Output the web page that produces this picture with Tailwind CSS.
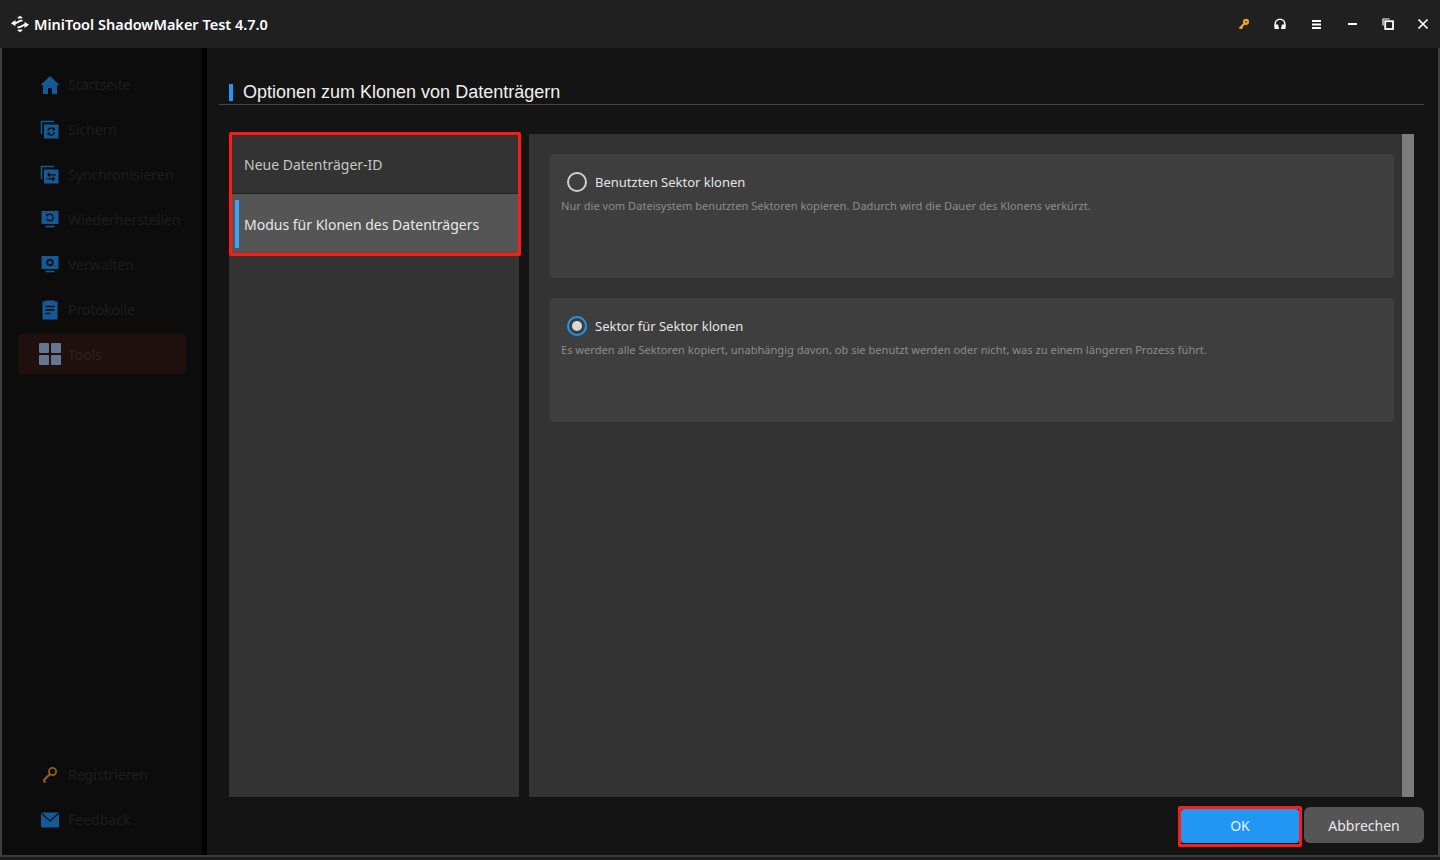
<!DOCTYPE html>
<html lang="de">
<head>
<meta charset="utf-8">
<script src="https://cdn.jsdelivr.net/npm/@tailwindcss/browser@4"></script>
</head>
<body class="m-0 h-[860px] w-[1440px] overflow-hidden bg-[#1a1a1a] font-['Noto_Sans','Open_Sans',sans-serif]">
<div class="flex h-[860px] w-[1440px] flex-col">
  <header class="flex h-12 shrink-0 items-center bg-[#202020] pl-[11px]">
    <svg class="h-[18px] w-[18px]" viewBox="0 0 18 18"><path d="M6.300 2.800 9 .8l2.700 2-1 .7H7.300zM6.300 15.200 9 17.200l2.700-2-1-.7H7.300z" fill="#fff"/><path d="M0 8.200 4.500 5v6.200zM18 9.800 13.500 13V6.800z" fill="#fff"/><path d="M4 8.200C7 8.200 7.500 5 11.500 5.800M14 9.800C11 9.800 10.500 13 6.500 12.200" fill="none" stroke="#fff" stroke-width="1.700"/></svg>
    <span class="ml-[5px] pt-[2px] text-[14.500px] font-semibold text-white">MiniTool ShadowMaker Test 4.7.0</span>
    <div class="ml-auto flex h-full items-center">
      <svg class="absolute left-[1238px] top-[18px] h-3 w-3" viewBox="0 0 12 12" fill="none" stroke="#f5a623"><circle cx="8" cy="3.800" r="2" stroke-width="2.200"/><path d="M6.500 5.500 1.500 10.500M3 9l1.500 1.500" stroke-width="2"/></svg>
      <svg class="absolute left-[1274px] top-[18px] h-3 w-3" viewBox="0 0 12 12" fill="none" stroke="#fff" stroke-width="1.500"><path d="M1.200 9V6a4.800 4.800 0 0 1 9.600 0v3"/><path d="M.5 6.500h3.500l1 4.500H.5zM11.500 6.500H8l-1 4.500h4.500z" fill="#fff" stroke="none"/></svg>
      <svg class="absolute left-[1311px] top-[19px] h-[11px] w-[11px]" viewBox="0 0 11 11" fill="#fff"><path d="M1 1h9v2H1zM1 4.500h9v2H1zM1 8h9v2H1z"/></svg>
      <div class="absolute left-[1348px] top-[23px] h-[2px] w-[9px] bg-white"></div>
      <svg class="absolute left-[1382px] top-[18px] h-3 w-3" viewBox="0 0 12 12" fill="none" stroke="#fff"><path d="M1 7.500V1h6.500" stroke-width="1.200"/><rect x="3.200" y="3.200" width="7.800" height="7.800" stroke-width="1.800"/></svg>
      <svg class="absolute left-[1417px] top-[18px] h-3 w-3" viewBox="0 0 12 12" fill="none" stroke="#fff" stroke-width="1.700"><path d="M1.500 1.500l9 9M10.500 1.500l-9 9"/></svg>
    </div>
  </header>
  <div class="mb-[3px] flex min-h-0 flex-1 border-b-2 border-b-[#3c3c3c] border-l-2 border-l-[#3f3f3f] border-r-2 border-r-[#3f3f3f]">
    <aside class="box-content flex w-[200px] shrink-0 flex-col justify-between border-r-[5px] border-r-black bg-[#0c0c0c]">
      <nav class="flex flex-col pt-[14px] text-[14px] text-[#1e1e1e]">
        <div class="flex h-[45px] items-center pl-[38px]">
          <svg class="h-5 w-5" viewBox="0 0 20 20" fill="#145a96"><path d="M10 1 0.500 10H3v9h5v-6h4v6h5v-9h2.500z"/></svg>
          <span class="ml-2">Startseite</span>
        </div>
        <div class="flex h-[45px] items-center pl-[38px]">
          <svg class="h-5 w-5" viewBox="0 0 20 20"><path d="M1.500 14V1.500H14" fill="none" stroke="#145a96" stroke-width="1.500"/><rect x="4" y="4.500" width="14.500" height="14" fill="#145a96"/><path d="M8 11a3.300 3.300 0 0 1 5.800-2M14.500 12a3.300 3.300 0 0 1-5.800 2" fill="none" stroke="#0c0c0c" stroke-width="1.300"/><path d="M15 7.500v3h-3zM7.500 15.500v-3h3z" fill="#0c0c0c"/></svg>
          <span class="ml-2">Sichern</span>
        </div>
        <div class="flex h-[45px] items-center pl-[38px]">
          <svg class="h-5 w-5" viewBox="0 0 20 20"><path d="M1.500 14V1.500H14" fill="none" stroke="#145a96" stroke-width="1.500"/><rect x="4" y="4.500" width="14.500" height="14" fill="#145a96"/><path d="M8 9.800h8M14 13.800H6.500" stroke="#0c0c0c" stroke-width="1.300"/><path d="M10 7v5.500L7 9.800zM12.500 11v5.500l3-2.700z" fill="#0c0c0c"/></svg>
          <span class="ml-2">Synchronisieren</span>
        </div>
        <div class="flex h-[45px] items-center pl-[38px]">
          <svg class="h-5 w-5" viewBox="0 0 20 20"><path d="M1.500 1h17v13h-17z" fill="#145a96"/><path d="M5.500 16.500h9" stroke="#145a96" stroke-width="1.600"/><path d="M7 5.800A3.300 3.300 0 1 1 6.800 8.500" fill="none" stroke="#0c0c0c" stroke-width="1.300"/><path d="M5.800 3.500 9 4.500 6.500 7z" fill="#0c0c0c"/></svg>
          <span class="ml-2">Wiederherstellen</span>
        </div>
        <div class="flex h-[45px] items-center pl-[38px]">
          <svg class="h-5 w-5" viewBox="0 0 20 20"><path d="M1.500 1h17v13h-17z" fill="#145a96"/><path d="M5.500 16.500h9" stroke="#145a96" stroke-width="1.600"/><circle cx="10" cy="7.500" r="2.800" fill="none" stroke="#0c0c0c" stroke-width="1.500"/><path d="M10 3.500v8M6 7.500h8M7.200 4.700l5.600 5.600M12.800 4.700l-5.600 5.600" stroke="#0c0c0c" stroke-width="1"/><circle cx="10" cy="7.500" r="1.800" fill="#145a96"/></svg>
          <span class="ml-2">Verwalten</span>
        </div>
        <div class="flex h-[45px] items-center pl-[38px]">
          <svg class="h-5 w-5" viewBox="0 0 20 20"><path d="M2.500 1.500h3V.5h9v1h3v18h-15z" fill="#145a96"/><path d="M5.500 6.500h9M5.500 10h9M5.500 13.500h5" stroke="#0c0c0c" stroke-width="1.300"/></svg>
          <span class="ml-2">Protokolle</span>
        </div>
        <div class="ml-4 mt-[2px] flex h-10 w-[168px] items-center rounded bg-[#200f0f] pl-[21px] text-[#2c2222]">
          <svg class="h-[22px] w-[22px] shrink-0" viewBox="0 0 22 22" fill="#66768f"><rect width="10" height="10" rx="1"/><rect x="12" width="10" height="10" rx="1"/><rect y="12" width="10" height="10" rx="1"/><rect x="12" y="12" width="10" height="10" rx="1"/></svg>
          <span class="ml-[7px]">Tools</span>
        </div>
      </nav>
      <div class="flex flex-col pb-[13px] text-[14px] text-[#1e1e1e]">
        <div class="flex h-[45px] items-center pl-[38px]">
          <svg class="h-5 w-5" viewBox="0 0 20 20" fill="none" stroke="#8a6116"><circle cx="12.500" cy="6.500" r="3.600" stroke-width="1.800"/><path d="M9.800 9.200 3.500 15.500M3.500 15.500l2 2" stroke-width="2.200"/></svg>
          <span class="ml-2">Registrieren</span>
        </div>
        <div class="flex h-[45px] items-center pl-[38px]">
          <svg class="h-5 w-5" viewBox="0 0 20 20"><rect x="1" y="2.500" width="18" height="15" rx="1" fill="#145a96"/><path d="M1.500 3.500 10 11l8.500-7.500" fill="none" stroke="#0c0c0c" stroke-width="1.200"/></svg>
          <span class="ml-2">Feedback</span>
        </div>
      </div>
    </aside>
    <main class="relative flex min-w-0 flex-1 flex-col bg-[#141414] pl-[12px] pr-[14px]">
      <div class="flex h-[57px] shrink-0 items-end border-b border-[#444] pl-[10px]">
        <span class="mb-[3px] h-[17px] w-1 bg-[#2196f3]"></span>
        <h1 class="ml-[10px] text-[18px] leading-[24px] text-[#f0f0f0] font-['Liberation_Sans',sans-serif]">Optionen zum Klonen von Datenträgern</h1>
      </div>
      <div class="mt-[29px] flex h-[663px] shrink-0 pl-[10px] pr-[10px]">
        <div class="w-[290px] shrink-0 bg-[#333]">
          <div class="flex h-[60px] items-center border-b border-[#222] pl-[15px] pt-[2px] text-[14px] text-[#c6c6c6]">Neue Datenträger-ID</div>
          <div class="flex h-[60px] items-center bg-[#555] pl-[6px] text-[14px] text-[#e8e8e8]">
            <span class="h-12 w-1 bg-[#3fa0f5]"></span>
            <span class="ml-[5px]">Modus für Klonen des Datenträgers</span>
          </div>
        </div>
        <div class="ml-[10px] flex flex-1 bg-[#333]">
          <div class="flex flex-1 flex-col gap-5 py-5 pl-5 pr-2">
            <section class="h-[124px] rounded bg-[#3e3e3e] pl-3 pt-[18px]">
              <label class="flex items-center pl-[6px] text-[13px] leading-5 text-[#e4e4e4]">
                <span class="h-5 w-5 rounded-full border-2 border-[#d0d0d0]"></span>
                <span class="ml-2">Benutzten Sektor klonen</span>
              </label>
              <p class="mt-[6px] text-[11.080px] leading-4 text-[#8c8c8c]">Nur die vom Dateisystem benutzten Sektoren kopieren. Dadurch wird die Dauer des Klonens verkürzt.</p>
            </section>
            <section class="h-[124px] rounded bg-[#3e3e3e] pl-3 pt-[18px]">
              <label class="flex items-center pl-[6px] text-[13px] leading-5 text-[#e4e4e4]">
                <span class="flex h-5 w-5 items-center justify-center rounded-full border-2 border-[#2196f3]"><span class="h-[10px] w-[10px] rounded-full bg-[#d8d8d8]"></span></span>
                <span class="ml-2">Sektor für Sektor klonen</span>
              </label>
              <p class="mt-[6px] text-[11.080px] leading-4 text-[#8c8c8c]">Es werden alle Sektoren kopiert, unabhängig davon, ob sie benutzt werden oder nicht, was zu einem längeren Prozess führt.</p>
            </section>
          </div>
          <div class="w-3 shrink-0 bg-[#7c7c7c]"></div>
        </div>
      </div>
      <div class="flex flex-1 items-start justify-end gap-[5px] pt-[10px]">
        <button class="mt-[2px] h-[34px] w-[118px] rounded-[3px] bg-[#2196f3] pb-[2px] text-[14px] text-[#e8f2fb]">OK</button>
        <button class="h-9 w-[120px] rounded-md bg-[#555] text-[14px] text-[#e8e8e8]">Abbrechen</button>
      </div>
      <div class="absolute left-[22px] top-[84px] h-[124px] w-[292px] rounded-[2px] border-[3px] border-[#ff1c14]"></div>
      <div class="absolute left-[971px] top-[758px] h-[41px] w-[124px] rounded-[2px] border-[3px] border-[#ff1c14]"></div>
    </main>
  </div>
</div>
</body>
</html>
